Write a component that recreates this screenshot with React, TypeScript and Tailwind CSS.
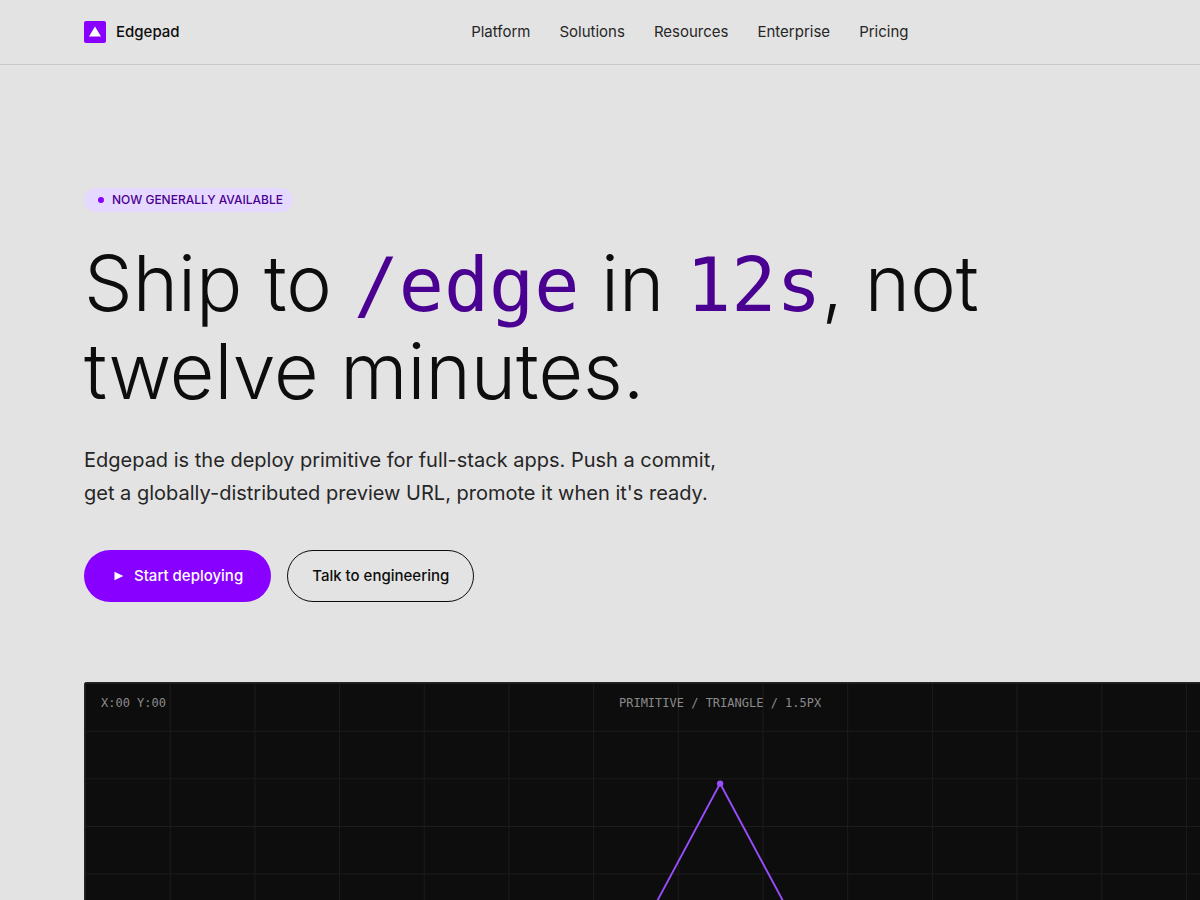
const NAV_LINKS = ["Platform", "Solutions", "Resources", "Enterprise", "Pricing"];

const GRID_COLUMNS = Array.from({ length: 16 }, (_, i) => i * 80);
const GRID_ROWS = Array.from({ length: 16 }, (_, i) => i * 45);

function Logo() {
  return (
    <a href="#" className="flex items-center gap-2.5 text-[15px] font-medium text-[#0d0d0d]">
      <svg viewBox="0 0 22 22" className="size-[22px]" aria-hidden>
        <rect width="22" height="22" rx="2" fill="#8800ff" />
        <path d="M11 5.5 L17 15.5 H5 Z" fill="#fff" />
      </svg>
      Edgepad
    </a>
  );
}

function Header() {
  return (
    <header className="flex h-[65px] items-center justify-between border-b border-[#c8c8c8] pl-[84px]">
      <Logo />
      <nav className="flex gap-[29px] text-[15px] text-[#262626]">
        {NAV_LINKS.map((label) => (
          <a key={label} href="#" className="hover:text-black">
            {label}
          </a>
        ))}
      </nav>
      <div />
    </header>
  );
}

function Code({ children }: { children: string }) {
  return (
    <span className="font-['DejaVu_Sans_Mono',monospace] text-[75px] leading-none font-normal text-[#4a0090]">
      {children}
    </span>
  );
}

function Hero() {
  return (
    <section className="flex flex-col items-start px-[84px] pt-[123px]">
      <p className="flex h-6 items-center gap-2 rounded-full bg-[#e6d9ff] pr-2.5 pl-3.5 text-xs font-medium text-[#4a0090] uppercase">
        <span className="size-1.5 rounded-full bg-[#8800ff]" />
        Now generally available
      </p>
      <h1 className="mt-[27px] max-w-[960px] text-[77px] leading-[88px] font-light text-[#0d0d0d]">
        Ship to <Code>/edge</Code> in <Code>12s</Code>, not twelve minutes.
      </h1>
      <p className="mt-[29px] max-w-[660px] text-xl leading-[33px] text-[#262626]">
        Edgepad is the deploy primitive for full-stack apps. Push a commit, get a
        globally-distributed preview URL, promote it when it's ready.
      </p>
      <div className="mt-10 flex gap-4 text-[15px] font-medium">
        <button
          type="button"
          className="flex h-[52px] items-center gap-2.5 rounded-full bg-[#8800ff] px-7 text-white"
        >
          <svg viewBox="0 0 12 12" className="size-3" aria-hidden>
            <path d="M2.5 1.8 L11.3 6 L2.5 10.2 Z" fill="currentColor" />
          </svg>
          Start deploying
        </button>
        <button
          type="button"
          className="h-[52px] rounded-full border border-[#0d0d0d] px-6 text-[#0d0d0d]"
        >
          Talk to engineering
        </button>
      </div>
    </section>
  );
}

function PrimitivePanel() {
  return (
    <section className="mt-20 pl-[84px]">
      {/* bleeds off the right edge of the window */}
      <div className="relative w-[114%] rounded-xs border border-[#262626] bg-[#0d0d0d]">
        <svg viewBox="0 0 1200 675" className="block w-full" aria-hidden>
          <g stroke="#262626" strokeWidth="1" opacity="0.6">
            {GRID_COLUMNS.map((x) => (
              <line key={x} x1={x + 0.5} y1="0" x2={x + 0.5} y2="675" />
            ))}
            {GRID_ROWS.map((y) => (
              <line key={y} x1="0" y1={y + 0.5} x2="1200" y2={y + 0.5} />
            ))}
          </g>
          <path d="M600 95 L868 595 H332 Z" fill="none" stroke="#9a4dff" strokeWidth="1.75" />
          <circle cx="600" cy="95" r="3" fill="#9a4dff" />
        </svg>
        <div className="absolute inset-x-4 top-3 grid grid-cols-3 font-['DejaVu_Sans_Mono',monospace] text-xs text-[#8a8a8a]">
          <span>X:00 Y:00</span>
          <span className="text-center">PRIMITIVE / TRIANGLE / 1.5PX</span>
        </div>
      </div>
    </section>
  );
}

export default function App() {
  return (
    <div className="h-screen overflow-hidden bg-[#e3e3e3] font-['Inter',sans-serif]">
      <Header />
      <main>
        <Hero />
        <PrimitivePanel />
      </main>
    </div>
  );
}
